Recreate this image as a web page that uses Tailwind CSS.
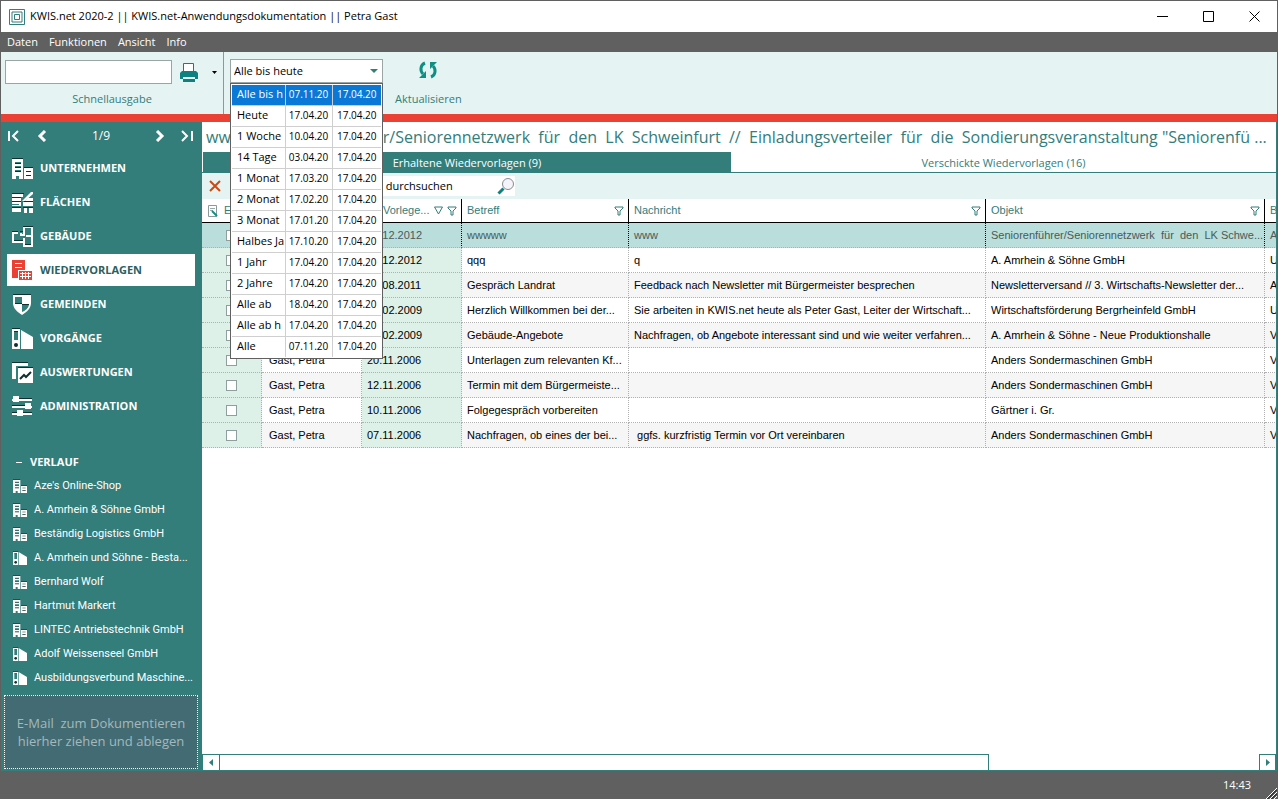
<!DOCTYPE html>
<html lang="de">
<head>
<meta charset="utf-8">
<title>KWIS.net 2020-2</title>
<script src="https://cdn.jsdelivr.net/npm/@tailwindcss/browser@4"></script>
</head>
<body class="h-screen overflow-hidden bg-[#606060] font-['Open_Sans','Noto_Sans',sans-serif] text-[11px] text-black">

<svg class="hidden" aria-hidden="true">
  <symbol id="company" viewBox="0 0 21 21">
    <path fill="#fff" d="M0 1h11v20H7v-3H4v3H0zM12 10h9v11h-9z"/>
    <path fill="#10302f" d="M0 0h11v1H0zM12 9h9v1h-9zM3 5h6v1H3zM3 9h6v1H3zM3 13h6v1H3zM14 13h5v1h-5zM14 17h5v1h-5z"/>
    <path fill="#337d7b" d="M3 4h6v1H3zM3 8h6v1H3zM3 12h6v1H3z"/>
  </symbol>
  <symbol id="area" viewBox="0 0 21 21">
    <path fill="#fff" d="M0 2h11v3H0zM0 6h9v3H0zM0 10h9v4H0zM0 16h10v4H0zM11 10h10v4H11zM12 16h3v5h-3zM17 16h4v5h-4zM19 0h2v2l-8 7h-3z"/>
    <path fill="#fff" d="M16 6h5v3h-8z"/>
    <path fill="#10302f" d="M0 1h12v1H0zM0 9h9v1H0zM0 5h9v1H0zM12 9h9v1h-9zM0 15h21v1H0z"/>
    <path fill="#337d7b" d="M9 9h2v12H9zM0 12h7v1H0z"/>
  </symbol>
  <symbol id="building" viewBox="0 0 21 21">
    <path fill="none" stroke="#fff" stroke-width="2" d="M6 7H1v9h11v4h8V1h-8v8H9V7M12 16v-4M19 10h-5"/>
    <path fill="#10302f" d="M0 5h6v1H0zM8 5h3v1H8zM11 0h10v1H11zM2 14h9v1H2zM13 18h6v1h-6z"/>
  </symbol>
  <symbol id="reminder" viewBox="0 0 21 21">
    <path fill="#eb4034" d="M0 0h13v10H6v8H0zM7 11h13v9H7z"/>
    <path fill="#fff" d="M3 3h7v1H3zM3 7h7v1H3zM8 13h11v1H8zM8 16h11v1H8zM10 12h1v7h-1zM13 12h1v7h-1zM16 12h1v7h-1z"/>
  </symbol>
  <symbol id="shield" viewBox="0 0 21 21">
    <path fill="#fff" d="M1 1h18v8c0 5-4 9-9 12C5 18 1 14 1 9z"/>
    <path fill="#10302f" d="M1 0h18v1H1z"/>
    <path fill="#337d7b" d="M3 3h7v7H3zM10 10h7c0 4-4 7-7 8z"/>
    <path fill="#10302f" d="M3 9h7v1H3zM10 10h7v1h-7z"/>
  </symbol>
  <symbol id="folder" viewBox="0 0 21 21">
    <path fill="#fff" d="M0 1h8v20H0zM9 2l12 7v12H9z"/>
    <path fill="#10302f" d="M0 0h8v1H0zM2 3h4v1H2z"/>
    <path fill="#337d7b" d="M2 4h4v8H2z"/>
    <circle cx="4" cy="17" r="2" fill="#10302f"/>
  </symbol>
  <symbol id="chart" viewBox="0 0 21 21">
    <path fill="#fff" d="M0 1h16v3H4v13H0zM6 6h15v15H6z"/>
    <path fill="#10302f" d="M0 0h16v1H0zM6 5h15v1H6z"/>
    <path fill="none" stroke="#10302f" stroke-width="2" d="M8 17l4-4 2 2 5-5"/>
  </symbol>
  <symbol id="sliders" viewBox="0 0 21 21">
    <path fill="#fff" d="M0 3h20v2H0zM0 10h20v2H0zM0 17h20v2H0zM1 0h6v6H1zM13 7h6v6h-6zM5 14h6v6H5z"/>
    <path fill="#10302f" d="M7 2h13v1H7zM0 9h13v1H0zM0 16h5v1H0zM11 16h9v1h-9z"/>
  </symbol>
  <symbol id="funnel" viewBox="0 0 10 10">
    <path fill="none" stroke="#337d7b" d="M1 1h8v1L6 5v4H4V5L1 2z"/>
  </symbol>
</svg>

<div class="flex h-full flex-col border-x border-t border-[#606060]">

  <header class="flex h-[31px] shrink-0 items-center bg-white">
    <svg class="ml-2 h-4 w-4" viewBox="0 0 16 16" fill="none" stroke="#337d7b"><path d="M.5.5h15v15H.5zM3 3h10v10H3zM5.500 5.500h5v5h-5z"/></svg>
    <h1 class="ml-[5px]">KWIS.net 2020-2 || KWIS.net-Anwendungsdokumentation || Petra Gast</h1>
    <div class="ml-auto flex">
      <button aria-label="Minimieren" class="flex w-[46px] justify-center"><svg class="h-[11px] w-[11px]" viewBox="0 0 11 11"><path stroke="#000" d="M0 5.500h11"/></svg></button>
      <button aria-label="Maximieren" class="flex w-[46px] justify-center"><svg class="h-[11px] w-[11px]" viewBox="0 0 11 11"><path fill="none" stroke="#000" d="M.5.5h10v10H.5z"/></svg></button>
      <button aria-label="Schließen" class="flex w-[46px] justify-center"><svg class="h-[11px] w-[11px]" viewBox="0 0 11 11"><path stroke="#000" d="M.5.5l10 10M10.500.5l-10 10"/></svg></button>
    </div>
  </header>

  <nav class="flex h-5 shrink-0 items-center gap-[11px] bg-[#606060] pl-[6px] text-white">
    <button>Daten</button><button>Funktionen</button><button>Ansicht</button><button>Info</button>
  </nav>

  <section class="flex h-[62px] shrink-0 bg-[#e5f4f3] text-[#337d7b]">
    <div class="flex w-[223px] flex-col border-r border-[#8a9a9a] pt-2 pl-1">
      <div class="flex items-center">
        <input id="quick" class="h-6 w-[167px] border border-[#9aa5a5] bg-white px-1 text-black">
        <button aria-label="Drucken" class="ml-2"><svg class="h-[19px] w-[18px]" viewBox="0 0 18 19"><path fill="#fff" stroke="#0d8080" d="M3.500.5h10v8h-10z"/><path fill="#0d8080" d="M2 8h14l2 2v6h-3v-2H3v2H0v-6zM3 16h12v3H3z"/></svg></button>
        <button aria-label="Druckoptionen" class="ml-[14px]"><svg class="h-[3px] w-[5px]" viewBox="0 0 5 3"><path d="M0 0h5L2.500 3z"/></svg></button>
      </div>
      <label for="quick" class="mt-[7px] w-[214px] text-center">Schnellausgabe</label>
    </div>
    <div class="relative mt-[7px] ml-[6px] h-6 w-[153px]">
      <select aria-label="Zeitraum" class="h-6 w-full appearance-none border border-[#9aa5a5] bg-white pl-[3px] text-black"><option>Alle bis heute</option></select>
      <svg class="pointer-events-none absolute top-[10px] right-[5px] h-1 w-2" viewBox="0 0 8 4"><path fill="#337d7b" d="M0 0h8L4 4z"/></svg>
      <div class="absolute top-6 left-0 z-10 w-full border border-[#606060] bg-white p-px text-black">
        <table class="w-full table-fixed border-collapse leading-[14px]">
          <colgroup><col class="w-[53px]"><col class="w-[47px]"><col></colgroup>
          <tbody id="ranges"></tbody>
        </table>
      </div>
    </div>
    <button class="ml-3 flex flex-col items-center pt-[9px]">
      <svg class="h-[18px] w-[18px]" viewBox="0 0 18 18"><path fill="none" stroke="#0d8f83" stroke-width="3" d="M6 2C1 4 1 10 4 13M12 16c5-2 5-8 2-11"/><path fill="#0d8f83" d="M7 10v7H0zM11 8V1h7z"/></svg>
      <span class="mt-3">Aktualisieren</span>
    </button>
  </section>

  <div class="h-2 shrink-0 bg-[#eb4034]"></div>

  <div class="flex min-h-0 flex-1">
    <aside class="flex w-[201px] shrink-0 flex-col bg-[#337d7b] text-white">
      <div class="flex h-7 items-center pr-[9px] pl-[7px]">
        <button aria-label="Erster"><svg class="h-3 w-3" viewBox="0 0 12 12" fill="none" stroke="#fff" stroke-width="2"><path d="M1 1v10M10 1L5 6l5 5"/></svg></button>
        <button aria-label="Zurück" class="ml-[17px]"><svg class="h-3 w-3" viewBox="0 0 12 12" fill="none" stroke="#fff" stroke-width="3"><path d="M8 1L3 6l5 5"/></svg></button>
        <span class="flex-1 text-center text-xs">1/9</span>
        <button aria-label="Weiter" class="mr-4"><svg class="h-3 w-3" viewBox="0 0 12 12" fill="none" stroke="#fff" stroke-width="3"><path d="M4 1l5 5-5 5"/></svg></button>
        <button aria-label="Letzter"><svg class="h-3 w-3" viewBox="0 0 12 12" fill="none" stroke="#fff" stroke-width="2"><path d="M11 1v10M1 1l5 5-5 5"/></svg></button>
      </div>
      <nav id="nav" class="mt-[2px] flex flex-col gap-[2px] pr-[7px] pl-[6px] font-bold"></nav>
      <h2 class="mt-[28px] flex h-6 items-center pl-[15px] font-bold"><span class="mr-2 h-px w-[6px] bg-white"></span>VERLAUF</h2>
      <ul id="history" class="pl-3 font-['Roboto','Noto_Sans',sans-serif]"></ul>
      <div class="mr-1 ml-[3px] mt-auto mb-[2px] flex h-[74px] flex-col items-center justify-center border border-dotted border-white bg-[#436b73] text-[13px] leading-[18px] text-[#a3b9bc]">
        <span class="whitespace-pre">E-Mail  zum Dokumentieren</span><span>hierher ziehen und ablegen</span>
      </div>
    </aside>

    <main class="flex min-w-0 flex-1 flex-col border-r border-[#337d7b] bg-white">
      <h2 class="h-[30px] shrink-0 overflow-hidden pl-1 text-base leading-[30px] text-ellipsis whitespace-pre text-[#337d7b]">wwww // Seniorenführer/Seniorennetzwerk  für  den  LK  Schweinfurt  //  Einladungsverteiler  für  die  Sondierungsveranstaltung "Seniorenfü ...</h2>
      <div class="flex h-[21px] shrink-0 border-b border-[#337d7b] pl-px text-[#337d7b]">
        <button class="w-[528px] bg-[#337d7b] pt-[2px] text-white">Erhaltene Wiedervorlagen (9)</button>
        <button class="flex-1 pt-[2px]">Verschickte Wiedervorlagen (16)</button>
      </div>
      <div class="flex h-[26px] shrink-0 items-center bg-[#e5f4f3] pl-[7px]">
        <button aria-label="Löschen"><svg class="h-3 w-3" viewBox="0 0 12 12"><path stroke="#cc4a12" stroke-width="2" d="M1 1l10 10M11 1L1 11"/></svg></button>
        <div class="ml-[60px] flex h-5 w-[234px] items-center bg-white">
          <input aria-label="Suche" value="Wiedervorlagen durchsuchen" class="w-[216px] pl-[21px]">
          <svg class="h-[18px] w-[18px]" viewBox="0 0 18 18"><path stroke="#0d8080" stroke-width="3" d="M1.500 16.500l5-5"/><circle cx="11" cy="7" r="5.500" fill="#f4f4fa" stroke="#8a8a94"/></svg>
        </div>
      </div>
      <div class="min-h-0 flex-1 overflow-hidden font-['Liberation_Sans',Arial,sans-serif]">
        <table class="w-[1183px] table-fixed border-separate border-spacing-0">
          <colgroup><col class="w-[60px]"><col class="w-[100px]"><col class="w-[100px]"><col class="w-[167px]"><col class="w-[357px]"><col class="w-[279px]"><col></colgroup>
          <thead><tr id="head" class="h-6 text-left text-[#337d7b]"></tr></thead>
          <tbody id="rows"></tbody>
        </table>
      </div>
      <div class="flex h-[17px] shrink-0">
        <button aria-label="Nach links" class="flex w-[18px] items-center justify-center border border-[#337d7b]"><svg class="h-[7px] w-1" viewBox="0 0 4 7"><path fill="#337d7b" d="M4 0v7L0 3.500z"/></svg></button>
        <div class="flex-1 border-b border-[#337d7b]"><div class="h-full w-[74%] border-t border-r border-[#337d7b]"></div></div>
        <button aria-label="Nach rechts" class="flex w-[17px] items-center justify-center border border-[#337d7b]"><svg class="h-[7px] w-1" viewBox="0 0 4 7"><path fill="#337d7b" d="M0 0v7l4-3.500z"/></svg></button>
      </div>
    </main>
  </div>

  <footer class="relative flex h-7 shrink-0 items-center justify-end bg-[#606060] pr-[26px] text-white">
    14:43
    <svg class="absolute right-0 bottom-0 h-3 w-3" viewBox="0 0 12 12"><path stroke="#fff" d="M1 12L12 1M5 12l7-7M9 12l3-3"/><path stroke="#111" d="M2.500 12L12 2.500M6.500 12L12 6.500"/></svg>
  </footer>
</div>

<script>
const ranges = [['Alle bis h','07.11.20'],['Heute','17.04.20'],['1 Woche','10.04.20'],['14 Tage','03.04.20'],['1 Monat','17.03.20'],['2 Monat','17.02.20'],['3 Monat','17.01.20'],['Halbes Ja','17.10.20'],['1 Jahr','17.04.20'],['2 Jahre','17.04.20'],['Alle ab','18.04.20'],['Alle ab h','17.04.20'],['Alle','07.11.20']];
document.getElementById('ranges').innerHTML = ranges.map(([n, d], i) => `
  <tr class="${i ? 'h-[21px] border-t border-[#cfcfcf]' : 'h-5 bg-[#0a78d7] text-white'}">
    <td class="overflow-hidden p-0 pb-[2px] pl-[5px] whitespace-nowrap">${n}</td>
    <td class="overflow-hidden border-l border-[#cfcfcf] p-0 pb-[2px] text-center text-[10px] whitespace-nowrap">${d}</td>
    <td class="overflow-hidden border-l border-[#cfcfcf] p-0 pb-[2px] text-center text-[10px] whitespace-nowrap">17.04.20</td>
  </tr>`).join('');

const nav = [['company','UNTERNEHMEN'],['area','FLÄCHEN'],['building','GEBÄUDE'],['reminder','WIEDERVORLAGEN'],['shield','GEMEINDEN'],['folder','VORGÄNGE'],['chart','AUSWERTUNGEN'],['sliders','ADMINISTRATION']];
document.getElementById('nav').innerHTML = nav.map(([icon, label]) => `
  <a href="#${icon}" class="${icon === 'reminder' ? 'flex h-8 items-center gap-[7px] bg-white pl-[5px] text-[#2c5f60]' : 'flex h-8 items-center gap-[7px] pl-[5px]'}">
    <svg class="h-[21px] w-[21px]"><use href="#${icon}"/></svg>${label}</a>`).join('');

const history_ = [['company',"Aze's Online-Shop"],['company','A. Amrhein &amp; Söhne GmbH'],['company','Beständig Logistics GmbH'],['folder','A. Amrhein und Söhne - Besta...'],['company','Bernhard Wolf'],['company','Hartmut Markert'],['company','LINTEC Antriebstechnik GmbH'],['folder','Adolf Weissenseel GmbH'],['folder','Ausbildungsverbund Maschine...']];
document.getElementById('history').innerHTML = history_.map(([icon, label]) => `
  <li><a href="#verlauf" class="flex h-6 items-center gap-[7px] whitespace-nowrap"><svg class="h-[14px] w-[14px]"><use href="#${icon}"/></svg>${label}</a></li>`).join('');

const funnel = '<svg class="h-[10px] w-[10px] shrink-0"><use href="#funnel"/></svg>';
const sort = '<svg class="mr-1 h-[9px] w-[9px] shrink-0" viewBox="0 0 9 9"><path fill="none" stroke="#337d7b" d="M.5 1h8l-4 7z"/></svg>';
const note = '<svg class="mr-[6px] h-3 w-[11px] shrink-0" viewBox="0 0 11 12"><path fill="#fff" stroke="#8a9a9a" d="M1.500.5h8v11h-8z"/><path stroke="#9aa" d="M3 3.500h5M3 5.500h3"/><path stroke="#0d8f83" stroke-width="2" d="M5 6l5 5"/></svg>';
const heads = [[note + 'Erl.', ''],['Person', ''],['Vorlege...', sort + funnel],['Betreff', funnel],['Nachricht', funnel],['Objekt', funnel],['Bereich', '']];
document.getElementById('head').innerHTML = heads.map(([t, icons], i) => `
  <th class="${i > 1 && i < 6 ? 'border-r border-b border-black p-0 font-normal' : 'border-b border-black p-0 font-normal'}">
    <div class="${i === 2 ? 'flex items-center pr-1 pl-[21px]' : 'flex items-center pr-1 pl-[5px]'}"><span class="mr-auto flex items-center">${t}</span>${icons}</div>
  </th>`).join('');

const rows = [
 ['18.12.2012','wwwww','www','Seniorenführer/Seniorennetzwerk  für  den  LK Schwe...','Adressen'],
 ['17.12.2012','qqq','q','A. Amrhein &amp; Söhne GmbH','Unternehmen'],
 ['10.08.2011','Gespräch Landrat','Feedback nach Newsletter mit Bürgermeister besprechen','Newsletterversand // 3. Wirtschafts-Newsletter der...','Adressen'],
 ['16.02.2009','Herzlich Willkommen bei der...','Sie arbeiten in KWIS.net heute als Peter Gast, Leiter der Wirtschaft...','Wirtschaftsförderung Bergrheinfeld GmbH','Unternehmen'],
 ['16.02.2009','Gebäude-Angebote','Nachfragen, ob Angebote interessant sind und wie weiter verfahren...','A. Amrhein &amp; Söhne - Neue Produktionshalle','Vorgänge'],
 ['20.11.2006','Unterlagen zum relevanten Kf...','','Anders Sondermaschinen GmbH','Vorgänge'],
 ['12.11.2006','Termin mit dem Bürgermeiste...','','Anders Sondermaschinen GmbH','Vorgänge'],
 ['10.11.2006','Folgegespräch vorbereiten','','Gärtner i. Gr.','Vorgänge'],
 ['07.11.2006','Nachfragen, ob eines der bei...',' ggfs. kurzfristig Termin vor Ort vereinbaren','Anders Sondermaschinen GmbH','Vorgänge']];
document.getElementById('rows').innerHTML = rows.map((r, i) => {
  const sel = i === 0;
  const tr = sel ? 'h-[25px] bg-[#b9dedb] text-[#4a5a5a]' : i % 2 ? 'h-[25px] bg-white' : 'h-[25px] bg-[#f6f6f6]';
  const td = sel ? 'overflow-hidden border-r border-b border-dotted border-r-black border-b-[#b0b0b0] p-0 pl-[5px] whitespace-pre' : 'overflow-hidden border-r border-b border-dotted border-[#b0b0b0] p-0 pl-[5px] whitespace-pre';
  const green = sel ? td : 'overflow-hidden border-r border-b border-dotted border-[#b0b0b0] bg-[#ddf1e8] p-0 pl-[5px] whitespace-pre';
  return `<tr class="${tr}"><td class="${green}"><input type="checkbox" aria-label="Erledigt" class="ml-[19px] block h-[11px] w-[11px] appearance-none border border-[#8f9f9f] bg-white"></td><td class="${td}"><span class="pl-[2px]">Gast, Petra</span></td><td class="${green}">${r[0]}</td>${r.slice(1).map(c => `<td class="${td}">${c}</td>`).join('')}</tr>`;
}).join('');
</script>
</body>
</html>
